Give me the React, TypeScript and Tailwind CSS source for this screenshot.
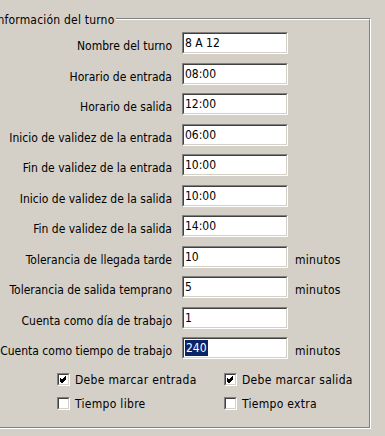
import React from "react";

const rows: { label: string; value: string; unit?: boolean; selected?: boolean }[] = [
  { label: "Nombre del turno", value: "8 A 12" },
  { label: "Horario de entrada", value: "08:00" },
  { label: "Horario de salida", value: "12:00" },
  { label: "Inicio de validez de la entrada", value: "06:00" },
  { label: "Fin de validez de la entrada", value: "10:00" },
  { label: "Inicio de validez de la salida", value: "10:00" },
  { label: "Fin de validez de la salida", value: "14:00" },
  { label: "Tolerancia de llegada tarde", value: "10", unit: true },
  { label: "Tolerancia de salida temprano", value: "5", unit: true },
  { label: "Cuenta como día de trabajo", value: "1" },
  { label: "Cuenta como tiempo de trabajo", value: "240", unit: true, selected: true },
];

// Classic sunken text box: gray/dark outer-inner top-left, white/light bottom-right.
function TextBox({ value, selected }: { value: string; selected?: boolean }) {
  return (
    <div className="h-[22px] w-[106px] border border-t-[#808080] border-l-[#808080] border-b-white border-r-white">
      <div className="flex h-full items-center border border-t-[#404040] border-l-[#404040] border-b-[#d4d0c8] border-r-[#d4d0c8] bg-white pl-[1px] font-['DejaVu_Sans_Condensed','Liberation_Sans',sans-serif] text-[12px] leading-none text-black">
        {selected ? <span className="bg-[#0a246a] px-[1px] py-[2px] text-white">{value}</span> : <span>{value}</span>}
      </div>
    </div>
  );
}

function Check({ checked, label }: { checked?: boolean; label: string }) {
  return (
    <div className="flex items-center gap-[5px]">
      <div className="h-[13px] w-[13px] border border-t-[#808080] border-l-[#808080] border-b-white border-r-white">
        <div className="h-full w-full border border-t-[#404040] border-l-[#404040] border-b-[#d4d0c8] border-r-[#d4d0c8] bg-white">
          {checked && (
            <svg width="9" height="9" viewBox="0 0 9 9" className="block">
              <path d="M1 3.5 L3 5.5 L7 1.5 M1 4.5 L3 6.5 L7 2.5 M1 5.5 L3 7.5 L7 3.5" stroke="#000" strokeWidth="1" fill="none" shapeRendering="crispEdges" />
            </svg>
          )}
        </div>
      </div>
      <span className="whitespace-nowrap tracking-[0.3px]">{label}</span>
    </div>
  );
}

export default function App() {
  return (
    <div className="h-[436px] w-[385px] overflow-hidden bg-[#d4d0c8] font-['DejaVu_Sans_Condensed','DejaVu_Sans',sans-serif] text-[12px] leading-[18px] text-black">
      <div className="ml-[-8px] mt-[18px] h-[411px] w-[379px] border border-t-[#808080] border-l-[#808080] border-b-white border-r-white">
        <div className="relative h-full w-full border border-t-white border-l-white border-b-[#808080] border-r-[#808080]">
          <div className="absolute left-[-2px] top-[-9px] bg-[#d4d0c8] pl-[2px] pr-[2px] leading-[18px] tracking-[0.2px] whitespace-nowrap">Información del turno</div>
          <div className="pt-[12px]">
            {rows.map((r) => (
              <div key={r.label} className="flex h-[30.5px] items-start">
                <div className="flex w-[178px] justify-end whitespace-nowrap pt-[5px]">{r.label}</div>
                <div className="ml-[10px]">
                  <TextBox value={r.value} selected={r.selected} />
                </div>
                {r.unit && <div className="ml-[7px] pt-[5px] tracking-[0.3px]">minutos</div>}
              </div>
            ))}
            <div className="mt-[3px] grid grid-cols-[167px_auto] gap-y-[6px] pl-[63px]">
              <Check checked label="Debe marcar entrada" />
              <Check checked label="Debe marcar salida" />
              <Check label="Tiempo libre" />
              <Check label="Tiempo extra" />
            </div>
          </div>
        </div>
      </div>
    </div>
  );
}
